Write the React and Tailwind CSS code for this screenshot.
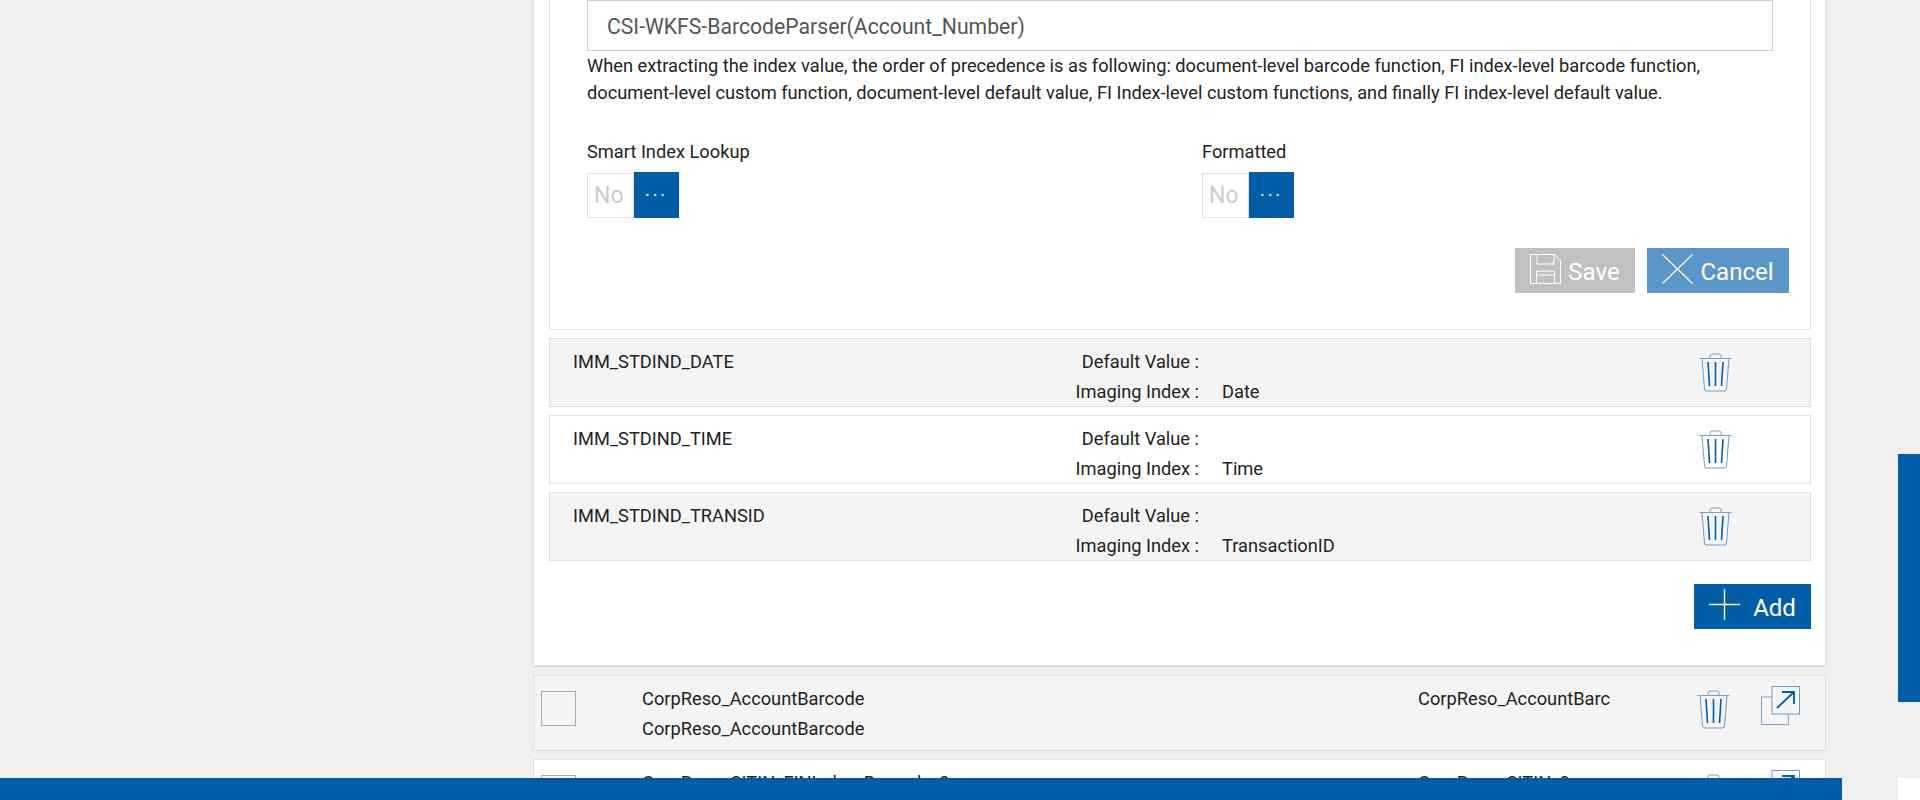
import React from 'react';

const blue = 'bg-[#005da6]';

const TrashIcon = ({ className }) => (
  <svg viewBox="0 0 33 39" className={className} fill="none">
    <path d="M11 5V3Q11 1 13 1H20Q22 1 22 3V5" stroke="#7f9fc4" strokeWidth="1" />
    <path d="M0.5 5.5H32.5" stroke="#7f9fc4" strokeWidth="1.2" />
    <path d="M3 5.5L5.5 36Q5.5 38 8 38H25Q27.5 38 27.5 36L30 5.5" stroke="#6f9bc9" strokeWidth="1" />
    <path d="M9 9L10.5 33M16.5 9V33M24 9L22.5 33" stroke="#005da6" strokeWidth="1.6" />
  </svg>
);

const OpenIcon = ({ className }) => (
  <svg viewBox="0 0 39 39" className={className} fill="none">
    <path d="M11 11H0.5V38.5H27.5V28" stroke="#7f9fc4" strokeWidth="1" />
    <rect x="11" y="0.5" width="27.5" height="27.5" stroke="#6f9bc9" strokeWidth="1" />
    <path d="M16 22L33 6M21 6H33V18" stroke="#005da6" strokeWidth="1.8" />
  </svg>
);

const SaveIcon = () => (
  <svg viewBox="0 0 31 30" className="mb-[3px] h-[30px] w-[31px]" fill="none" stroke="#ffffff" strokeWidth="1">
    <path d="M0.5 0.5H24L30.5 7V29.5H0.5Z" />
    <path d="M7 0.5V10H24V0.5" />
    <path d="M6.5 29.5V17H24.5V29.5M6.5 21H24.5" />
  </svg>
);

const CancelIcon = () => (
  <svg viewBox="0 0 31 30" className="mb-[3px] h-[30px] w-[31px]" fill="none" stroke="#ffffff" strokeWidth="1.2">
    <path d="M0.5 0.5L30.5 29.5M30.5 0.5L0.5 29.5" />
  </svg>
);

const PlusIcon = () => (
  <svg viewBox="0 0 31 31" className="mb-[4px] h-[31px] w-[31px]" fill="none" stroke="#ffffff" strokeWidth="1.4">
    <path d="M15.5 0V31M0 15.5H31" />
  </svg>
);

const Toggle = () => (
  <div className="flex h-[46px] w-[92px] items-center">
    <div className="flex h-[45px] w-[47px] items-center border border-[#e0e0e0] pt-[3px] pl-[6px] text-[23px] text-[#cccccc]">No</div>
    <div className={`flex h-[46px] w-[45px] items-center justify-center ${blue} text-[18px] tracking-[3px] text-white`}>···</div>
  </div>
);

const indexRows = [
  { name: 'IMM_STDIND_DATE', value: 'Date', shaded: true },
  { name: 'IMM_STDIND_TIME', value: 'Time', shaded: false },
  { name: 'IMM_STDIND_TRANSID', value: 'TransactionID', shaded: true },
];

const IndexRow = ({ name, value, shaded }) => (
  <div className={`flex h-[69px] border border-[#e0e0e0] pl-[23px] ${shaded ? 'bg-[#f4f4f4]' : 'bg-white'}`}>
    <div className="w-[380px] pt-[8px] leading-[30px]">{name}</div>
    <div className="w-[246px] pt-[8px] text-right leading-[30px]">
      <div>Default Value :</div>
      <div>Imaging Index :</div>
    </div>
    <div className="w-[500px] pl-[23px] pt-[38px] leading-[30px]">{value}</div>
    <TrashIcon className="mt-[14px] h-[39px] w-[33px]" />
  </div>
);

const App = () => {
  return (
    <div className="relative flex h-[800px] w-full justify-start overflow-hidden bg-[#f0f0f0] font-['Roboto',sans-serif] text-[18.25px] text-[#222222]">
      <div className="ml-[533px] flex w-[1293px] flex-col">
        <div className="h-[666px] shrink-0 border-r border-b border-l border-[#e4e4e4] bg-white pr-[14px] pl-[15px] shadow-sm">
          <div className="h-[330px] border-r border-b border-l border-[#e0e0e0] pr-[21px] pl-[37px]">
            <div className="flex h-[51px] w-[1186px] items-center border border-[#cccccc] pt-[2px] pl-[19px] text-[21.2px] text-[#555555]">
              CSI-WKFS-BarcodeParser(Account_Number)
            </div>
            <p className="mt-[1px] leading-[27px]">
              When extracting the index value, the order of precedence is as following: document-level barcode function, FI index-level barcode function,
              <br />
              document-level custom function, document-level default value, FI Index-level custom functions, and finally FI index-level default value.
            </p>
            <div className="mt-[34px] flex">
              <div className="w-[615px]">
                <div className="mb-[8px] h-[24px] leading-[24px]">Smart Index Lookup</div>
                <Toggle />
              </div>
              <div>
                <div className="mb-[8px] h-[24px] leading-[24px]">Formatted</div>
                <Toggle />
              </div>
            </div>
            <div className="mt-[30px] flex justify-end gap-[12px]">
              <button className="flex h-[45px] w-[120px] items-center justify-center gap-[7px] bg-[#c1c0c0] text-[24px] text-white">
                <SaveIcon />
                <span className="mt-[2px]">Save</span>
              </button>
              <button className="flex h-[45px] w-[142px] items-center justify-center gap-[7px] bg-[#5a96c8] text-[24px] text-white">
                <CancelIcon />
                <span className="mt-[2px]">Cancel</span>
              </button>
            </div>
          </div>
          <div className="mt-[8px] flex flex-col gap-[8px]">
            {indexRows.map((row) => (
              <IndexRow key={row.name} {...row} />
            ))}
          </div>
          <div className="mt-[23px] flex justify-end">
            <button className={`flex h-[45px] w-[117px] items-center justify-center gap-[13px] ${blue} text-[24px] text-white`}>
              <PlusIcon />
              <span className="mt-[3px]">Add</span>
            </button>
          </div>
        </div>

        <div className="mt-[9px] flex h-[76px] shrink-0 border border-[#e0e0e0] bg-[#f4f4f4]">
          <div className="mt-[15px] ml-[7px] h-[35px] w-[35px] border border-[#aaaaaa]" />
          <div className="ml-[66px] w-[776px] pt-[8px] leading-[30px]">
            <div>CorpReso_AccountBarcode</div>
            <div>CorpReso_AccountBarcode</div>
          </div>
          <div className="w-[279px] pt-[8px] leading-[30px]">CorpReso_AccountBarc</div>
          <TrashIcon className="mt-[14px] h-[39px] w-[33px]" />
          <OpenIcon className="mt-[10px] ml-[31px] h-[39px] w-[39px]" />
        </div>

        <div className="mt-[8px] flex h-[76px] shrink-0 border border-[#e0e0e0] bg-white">
          <div className="mt-[15px] ml-[7px] h-[35px] w-[35px] border border-[#aaaaaa]" />
          <div className="ml-[66px] w-[776px] pt-[8px] leading-[30px]">CorpReso_CITIN_FINIndex_Barcode_0</div>
          <div className="w-[279px] pt-[8px] leading-[30px]">CorpReso_CITIN_0</div>
          <TrashIcon className="mt-[14px] h-[39px] w-[33px]" />
          <OpenIcon className="mt-[10px] ml-[31px] h-[39px] w-[39px]" />
        </div>
      </div>

      {/* fixed page chrome on top of the content */}
      <div className={`absolute right-0 top-[454px] h-[248px] w-[22px] ${blue}`} />
      <div className={`absolute bottom-0 left-0 h-[22px] w-[1842px] ${blue}`} />
      <div className="absolute bottom-0 right-0 h-[22px] w-[22px] bg-white" />
    </div>
  );
};

export default App;
